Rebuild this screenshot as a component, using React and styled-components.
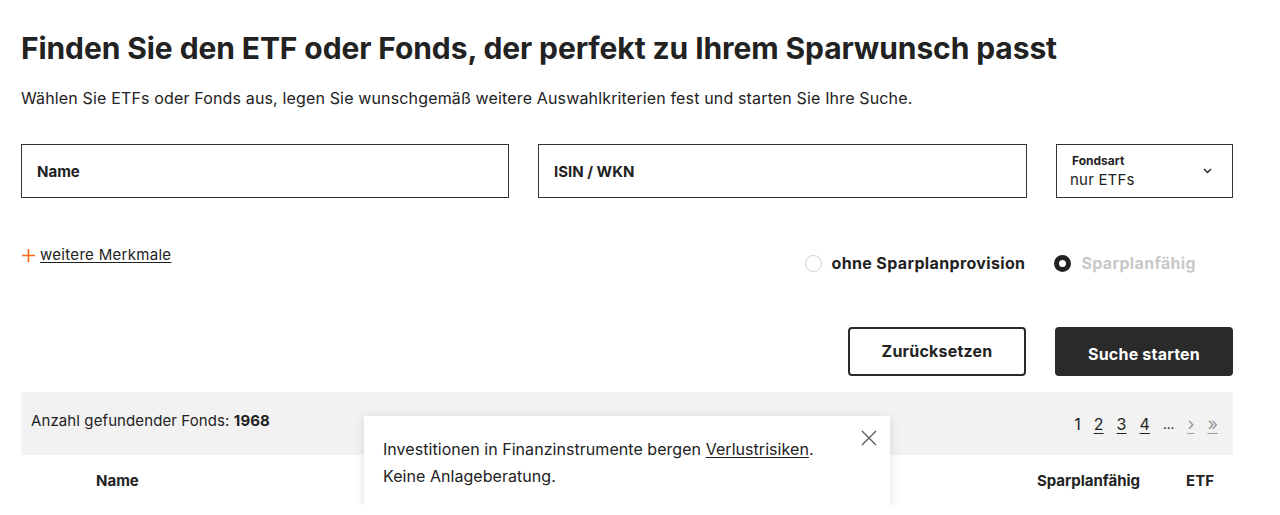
import React from "react";
import styled, { createGlobalStyle } from "styled-components";

const GlobalStyle = createGlobalStyle`
  body {
    margin: 0;
    background: #fff;
    color: #222;
    font-family: Inter, "Noto Sans", "Liberation Sans", sans-serif;
  }
`;

const Page = styled.div`
  position: relative;
  width: 1212px;
  padding: 30px 0 0 21px;
`;

const Title = styled.h1`
  margin: 0;
  font-size: 30px;
  line-height: 36px;
  font-weight: 700;
  letter-spacing: -0.1px;
  color: #222;
`;

const Lead = styled.p`
  margin: 20px 0 0;
  font-size: 16px;
  line-height: 24px;
  letter-spacing: 0.15px;
  color: #222;
`;

const Fields = styled.div`
  display: grid;
  grid-template-columns: 488px 489px 177px;
  gap: 29px;
  margin-top: 34px;
`;

const Field = styled.div`
  height: 54px;
  box-sizing: border-box;
  border: 1px solid #333;
  display: flex;
  align-items: center;
  padding: 0 15px;
  font-size: 15px;
  font-weight: 700;
  color: #222;
`;

const Select = styled(Field)`
  padding: 0 20px 0 13px;
  justify-content: space-between;
  font-weight: 400;
`;

const SelectText = styled.div`
  display: flex;
  flex-direction: column;
  margin-top: 1px;
`;

const SelectLabel = styled.span`
  font-size: 12px;
  line-height: 16px;
  font-weight: 700;
  padding-left: 2px;
`;

const SelectValue = styled.span`
  font-size: 15px;
  line-height: 22px;
  letter-spacing: 0.2px;
`;

const FilterRow = styled.div`
  display: flex;
  justify-content: space-between;
  align-items: flex-start;
  margin-top: 46px;
  height: 30px;
`;

const MoreLink = styled.a`
  display: flex;
  align-items: center;
  font-size: 15px;
  line-height: 22px;
  letter-spacing: 0.3px;
  color: #222;
  text-decoration: underline;
  text-underline-offset: 2px;
  cursor: pointer;
`;

const Radios = styled.div`
  display: flex;
  gap: 29px;
  padding-top: 8px;
  padding-right: 37px;
`;

const Radio = styled.label`
  display: flex;
  align-items: center;
  gap: 10px;
  font-size: 16px;
  line-height: 22px;
  font-weight: 700;
  letter-spacing: 0.35px;
  color: ${(p) => (p.$muted ? "#c8c8c8" : "#222")};
`;

const Dot = styled.span`
  width: 17px;
  height: 17px;
  box-sizing: border-box;
  border-radius: 50%;
  border: ${(p) => (p.$checked ? "5px solid #222" : "1px solid #d0d0d0")};
  background: #fff;
`;

const Actions = styled.div`
  display: flex;
  justify-content: flex-end;
  gap: 29px;
  margin-top: 53px;
`;

const Button = styled.button`
  width: 178px;
  height: 49px;
  box-sizing: border-box;
  border-radius: 4px;
  border: 2px solid #2a2a2a;
  background: ${(p) => (p.$primary ? "#2a2a2a" : "#fff")};
  color: ${(p) => (p.$primary ? "#fff" : "#222")};
  font-family: inherit;
  font-size: 16px;
  font-weight: 700;
  letter-spacing: 0.2px;
  padding: ${(p) => (p.$primary ? "4px 0 0" : "0 0 2px")};
  cursor: pointer;
`;

const ResultBar = styled.div`
  margin-top: 16px;
  height: 63px;
  background: #f2f2f2;
  display: flex;
  justify-content: space-between;
  align-items: flex-start;
  padding: 18px 15px 0 10px;
  box-sizing: border-box;
  font-size: 15px;
  line-height: 22px;
  letter-spacing: 0.1px;
`;

const Pager = styled.div`
  display: flex;
  align-items: center;
  gap: 13px;
  margin-top: 3px;
  font-size: 16px;
`;

const PageLink = styled.a`
  color: ${(p) => (p.$light ? "#999" : "#222")};
  text-decoration: ${(p) => (p.$plain ? "none" : "underline")};
  text-underline-offset: 3px;
  font-size: ${(p) => (p.$small ? "13px" : p.$light ? "18px" : "16px")};
`;

const TableHead = styled.div`
  height: 50px;
  display: flex;
  align-items: center;
  padding: 0 19px 0 75px;
  font-size: 15px;
  font-weight: 700;
`;

const HeadCell = styled.span`
  margin-left: ${(p) => (p.$push ? "auto" : "0")};
  margin-right: ${(p) => (p.$gap ? "46px" : "0")};
`;

const Toast = styled.div`
  position: absolute;
  left: 364px;
  top: 416px;
  width: 526px;
  height: 92px;
  box-sizing: border-box;
  background: #fff;
  box-shadow: 0 2px 10px rgba(0, 0, 0, 0.12);
  padding: 20px 19px 0;
  font-size: 16px;
  line-height: 27px;
  letter-spacing: 0.05px;
  color: #222;
`;

const ToastLink = styled.a`
  color: #222;
  text-decoration: underline;
  text-underline-offset: 2px;
`;

const Close = styled.button`
  position: absolute;
  right: 12px;
  top: 13px;
  border: 0;
  background: none;
  padding: 0;
  width: 18px;
  height: 18px;
  cursor: pointer;
`;

function Plus() {
  return (
    <svg width="15" height="15" viewBox="0 0 15 15" style={{ marginRight: 4 }}>
      <path d="M7.5 1v13M1 7.5h13" stroke="#ff6a13" strokeWidth="1.6" />
    </svg>
  );
}

function Chevron() {
  return (
    <svg width="9" height="6" viewBox="0 0 9 6">
      <path d="M1 1l3.5 3.5L8 1" stroke="#222" strokeWidth="1.5" fill="none" />
    </svg>
  );
}

export default function App() {
  return (
    <>
      <GlobalStyle />
      <Page>
        <Title>Finden Sie den ETF oder Fonds, der perfekt zu Ihrem Sparwunsch passt</Title>
        <Lead>
          Wählen Sie ETFs oder Fonds aus, legen Sie wunschgemäß weitere Auswahlkriterien fest und starten Sie Ihre Suche.
        </Lead>
        <Fields>
          <Field>Name</Field>
          <Field>ISIN / WKN</Field>
          <Select>
            <SelectText>
              <SelectLabel>Fondsart</SelectLabel>
              <SelectValue>nur ETFs</SelectValue>
            </SelectText>
            <Chevron />
          </Select>
        </Fields>
        <FilterRow>
          <MoreLink>
            <Plus />
            weitere Merkmale
          </MoreLink>
          <Radios>
            <Radio>
              <Dot />
              ohne Sparplanprovision
            </Radio>
            <Radio $muted>
              <Dot $checked />
              Sparplanfähig
            </Radio>
          </Radios>
        </FilterRow>
        <Actions>
          <Button>Zurücksetzen</Button>
          <Button $primary>Suche starten</Button>
        </Actions>
        <ResultBar>
          <span>
            Anzahl gefundender Fonds: <b>1968</b>
          </span>
          <Pager>
            <PageLink $plain>1</PageLink>
            <PageLink>2</PageLink>
            <PageLink>3</PageLink>
            <PageLink>4</PageLink>
            <PageLink $plain $small>…</PageLink>
            <PageLink $light>›</PageLink>
            <PageLink $light>»</PageLink>
          </Pager>
        </ResultBar>
        <TableHead>
          <HeadCell>Name</HeadCell>
          <HeadCell $push $gap>Sparplanfähig</HeadCell>
          <HeadCell>ETF</HeadCell>
        </TableHead>
        <Toast>
          Investitionen in Finanzinstrumente bergen <ToastLink>Verlustrisiken</ToastLink>.
          <br />
          Keine Anlageberatung.
          <Close aria-label="Schließen">
            <svg width="18" height="18" viewBox="0 0 18 18">
              <path d="M2 2l14 14M16 2L2 16" stroke="#555" strokeWidth="1.2" />
            </svg>
          </Close>
        </Toast>
      </Page>
    </>
  );
}
